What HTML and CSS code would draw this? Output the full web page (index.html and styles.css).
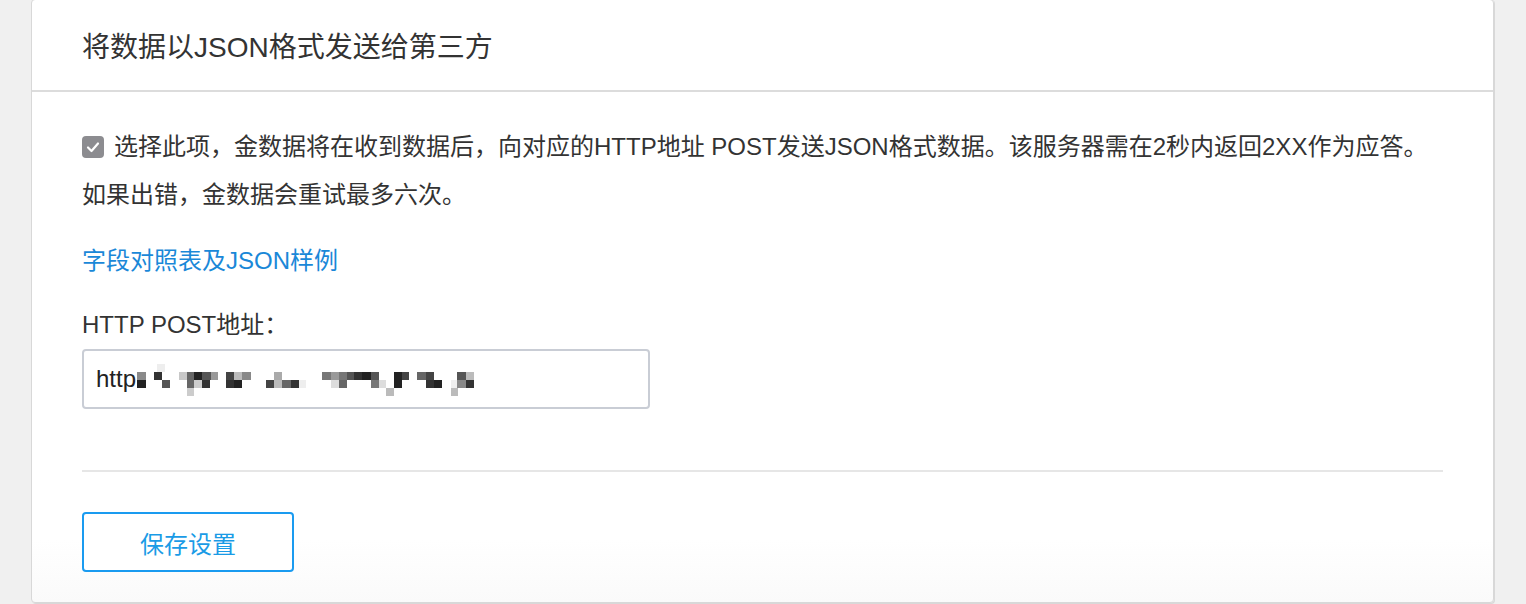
FILE: index.html
```html
<!DOCTYPE html>
<html lang="zh-CN">
<head>
<meta charset="utf-8">
<title>将数据以JSON格式发送给第三方</title>
<link rel="stylesheet" href="styles.css">
</head>
<body>
<div class="card">
  <div class="card-header">将数据以JSON格式发送给第三方</div>
  <div class="card-body">
    <p class="desc"><span class="checkbox"><svg width="22" height="22" viewBox="0 0 22 22"><rect x="0" y="0" width="22" height="22" rx="4" fill="#8c8c90"/><path d="M6 11.5 L9.5 15 L16 7.5" fill="none" stroke="#fff" stroke-width="2.2" stroke-linecap="round" stroke-linejoin="round"/></svg></span>选择此项，金数据将在收到数据后，向对应的HTTP地址 POST发送JSON格式数据。该服务器需在2秒内返回2XX作为应答。如果出错，金数据会重试最多六次。</p>
    <a class="link" href="#">字段对照表及JSON样例</a>
    <div class="label">HTTP POST地址：</div>
    <div class="input"><span class="input-text">http</span><svg class="blur" width="340" height="32" viewBox="0 0 340 32">
      <rect x="20" y="0" width="8" height="8" fill="#eeeeee"/>
      <rect x="0" y="8" width="9" height="8" fill="#8a8a8a"/>
      <rect x="17" y="8" width="8" height="8" fill="#333"/>
      <rect x="42" y="8" width="8" height="8" fill="#c8c8c8"/>
      <rect x="50" y="8" width="7" height="8" fill="#666"/>
      <rect x="57" y="8" width="8" height="8" fill="#222"/>
      <rect x="65" y="8" width="9" height="8" fill="#555"/>
      <rect x="74" y="8" width="7" height="8" fill="#999"/>
      <rect x="89" y="8" width="8" height="8" fill="#444"/>
      <rect x="97" y="8" width="8" height="8" fill="#bbb"/>
      <rect x="105" y="8" width="9" height="8" fill="#888"/>
      <rect x="137" y="8" width="8" height="8" fill="#aaa"/>
      <rect x="185" y="8" width="9" height="8" fill="#777"/>
      <rect x="194" y="8" width="8" height="8" fill="#999"/>
      <rect x="202" y="8" width="8" height="8" fill="#777"/>
      <rect x="210" y="8" width="7" height="8" fill="#555"/>
      <rect x="217" y="8" width="8" height="8" fill="#333"/>
      <rect x="225" y="8" width="9" height="8" fill="#222"/>
      <rect x="234" y="8" width="8" height="8" fill="#555"/>
      <rect x="257" y="8" width="8" height="8" fill="#222"/>
      <rect x="265" y="8" width="7" height="8" fill="#444"/>
      <rect x="280" y="8" width="9" height="8" fill="#666"/>
      <rect x="289" y="8" width="8" height="8" fill="#444"/>
      <rect x="320" y="8" width="9" height="8" fill="#555"/>
      <rect x="329" y="8" width="8" height="8" fill="#bbb"/>
      <rect x="0" y="16" width="9" height="8" fill="#222"/>
      <rect x="25" y="16" width="8" height="8" fill="#555"/>
      <rect x="50" y="16" width="7" height="8" fill="#666"/>
      <rect x="57" y="16" width="8" height="8" fill="#ccc"/>
      <rect x="65" y="16" width="8" height="8" fill="#333"/>
      <rect x="89" y="16" width="8" height="8" fill="#333"/>
      <rect x="97" y="16" width="8" height="8" fill="#222"/>
      <rect x="129" y="16" width="8" height="8" fill="#444"/>
      <rect x="137" y="16" width="8" height="8" fill="#bbb"/>
      <rect x="145" y="16" width="9" height="8" fill="#666"/>
      <rect x="154" y="16" width="8" height="8" fill="#333"/>
      <rect x="162" y="16" width="7" height="8" fill="#eee"/>
      <rect x="194" y="16" width="8" height="8" fill="#ddd"/>
      <rect x="202" y="16" width="8" height="8" fill="#666"/>
      <rect x="234" y="16" width="8" height="8" fill="#777"/>
      <rect x="242" y="16" width="7" height="8" fill="#ddd"/>
      <rect x="257" y="16" width="8" height="8" fill="#222"/>
      <rect x="289" y="16" width="8" height="8" fill="#333"/>
      <rect x="297" y="16" width="8" height="8" fill="#222"/>
      <rect x="314" y="16" width="7" height="8" fill="#eee"/>
      <rect x="320" y="16" width="9" height="8" fill="#888"/>
      <rect x="329" y="16" width="8" height="8" fill="#333"/>
      <rect x="50" y="24" width="7" height="8" fill="#ccc"/>
      <rect x="249" y="24" width="8" height="8" fill="#bbb"/>
      <rect x="314" y="24" width="7" height="8" fill="#bbb"/>
    </svg></div>
    <hr class="divider">
    <button class="btn" type="button">保存设置</button>
  </div>
</div>
</body>
</html>
```
FILE: styles.css
```css
html, body {
  margin: 0;
  padding: 0;
}
body {
  background: #f0f0f0;
  font-family: "Liberation Sans", "Noto Sans CJK SC", sans-serif;
  color: #333;
  height: 604px;
  overflow: hidden;
}
.card {
  margin-left: 31px;
  margin-top: -1px;
  width: 1463px;
  background: linear-gradient(to bottom, #fff 0, #fff 540px, #fafafa 100%);
  border: 1px solid #d8d8d8;
  border-radius: 4px;
  box-shadow: 1px 1px 0 #d8d8d8;
  box-sizing: border-box;
}
.card-header {
  height: 92px;
  box-sizing: border-box;
  padding-left: 50px;
  font-size: 28px;
  line-height: 96px;
  border-bottom: 2px solid #dcdcdc;
  color: #333;
}
.card-body {
  padding: 31px 50px 30px 50px;
}
.desc {
  margin: 0;
  font-size: 24px;
  line-height: 48px;
}
.checkbox {
  display: inline-block;
  width: 22px;
  height: 22px;
  margin-right: 10px;
  vertical-align: -3px;
}
.checkbox svg {
  display: block;
}
.link {
  display: block;
  margin-top: 18px;
  font-size: 24px;
  line-height: 48px;
  color: #1a88d8;
  text-decoration: none;
}
.label {
  margin-top: 16px;
  font-size: 24px;
  line-height: 48px;
}
.input {
  width: 568px;
  height: 60px;
  box-sizing: border-box;
  border: 2px solid #c9cdd5;
  border-radius: 4px;
  display: flex;
  align-items: center;
  padding-left: 12px;
  font-size: 24px;
  color: #222;
}
.input-text {
  line-height: 30px;
}
.blur {
  display: block;
  margin-left: 1px;
  margin-top: 2px;
}
.divider {
  margin: 61px 0 0 0;
  border: 0;
  height: 2px;
  background: #e6e6e6;
}
.btn {
  margin-top: 40px;
  display: block;
  width: 212px;
  height: 60px;
  box-sizing: border-box;
  border: 2px solid #1a9bf0;
  border-radius: 4px;
  background: #fff;
  color: #1a9be6;
  font-family: "Liberation Sans", "Noto Sans CJK SC", sans-serif;
  font-size: 24px;
  padding: 0;
}
```
